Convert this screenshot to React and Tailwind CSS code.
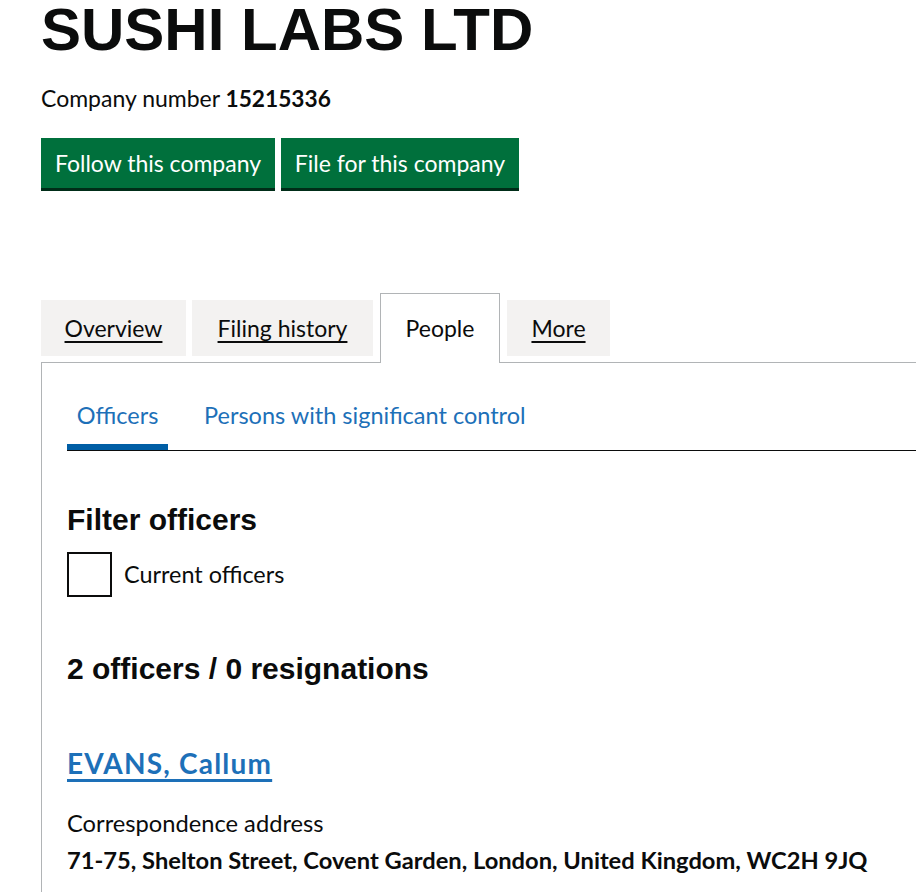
import React from 'react';

const body = { fontFamily: 'Lato, "Liberation Sans", Arial, sans-serif' };
const arial = { fontFamily: '"Liberation Sans", Arial, sans-serif' };

export default function App() {
  const tabs = [
    { label: 'Overview', w: 'w-[145px] mr-[6px]' },
    { label: 'Filing history', w: 'w-[181px] mr-[7px]' },
    { label: 'People', w: 'w-[120px] mr-[7px]', active: true },
    { label: 'More', w: 'w-[103px]' },
  ];

  return (
    <div className="min-h-[892px] bg-white text-[#0b0c0c] pl-[41px] overflow-hidden" style={body}>
      <h1 className="text-[60px] leading-none font-bold" style={arial}>
        SUSHI LABS LTD
      </h1>
      <p className="mt-[23px] text-[23px] leading-[31px]">
        Company number <strong className="font-bold text-[22.7px]">15215336</strong>
      </p>

      <div className="mt-[24px] flex gap-[6px]">
        <button className="h-[50px] w-[234px] bg-[#00703c] text-white text-[23px] shadow-[0_3px_0_#002d18]">
          Follow this company
        </button>
        <button className="h-[50px] w-[238px] bg-[#00703c] text-white text-[23px] shadow-[0_3px_0_#002d18]">
          File for this company
        </button>
      </div>

      {/* tabs */}
      <div className="mt-[105px] relative z-10 flex items-start h-[70px]">
        {tabs.map((t) =>
          t.active ? (
            <div
              key={t.label}
              className={`${t.w} h-[70px] bg-white border border-b-0 border-[#b1b4b6] flex items-center justify-center text-[23px]`}
            >
              {t.label}
            </div>
          ) : (
            <div
              key={t.label}
              className={`${t.w} mt-[7px] h-[56px] bg-[#f3f2f1] flex items-center justify-center text-[23px]`}
            >
              <a href="#" className="underline decoration-[2px] underline-offset-[4px] text-[#0b0c0c]">
                {t.label}
              </a>
            </div>
          )
        )}
      </div>

      {/* panel */}
      <div className="-mt-px border-t border-l border-[#b1b4b6] pl-[25px] pt-[37px] pb-[40px]">
        <ul className="flex border-b border-[#0b0c0c] text-[23.5px] leading-[31px] text-[#1d70b8]">
          <li className="w-[101px] text-center pb-[13px] border-b-[6px] border-[#005ea5]">Officers</li>
          <li className="ml-[26px] px-[10px] pb-[19px]">Persons with significant control</li>
        </ul>

        <h2 className="mt-[51px] text-[30px] leading-[36px] font-bold" style={arial}>
          Filter officers
        </h2>
        <label className="mt-[14px] flex items-center gap-[12px] text-[23.4px]">
          <span className="w-[45px] h-[45px] border-2 border-[#0b0c0c] bg-white shrink-0" />
          Current officers
        </label>

        <h2 className="mt-[54px] text-[30px] leading-[36px] font-bold" style={arial}>
          2 officers / 0 resignations
        </h2>

        <h3 className="mt-[59px] text-[28px] leading-[34px] font-bold tracking-[1.2px]">
          <a href="#" className="text-[#1d70b8] underline decoration-[3px] underline-offset-[5px]">
            EVANS, Callum
          </a>
        </h3>
        <p className="mt-[28px] text-[23.7px] leading-[30px]">Correspondence address</p>
        <p className="mt-[7px] text-[23.7px] leading-[30px] font-bold">
          71-75, Shelton Street, Covent Garden, London, United Kingdom, WC2H 9JQ
        </p>
      </div>
    </div>
  );
}
